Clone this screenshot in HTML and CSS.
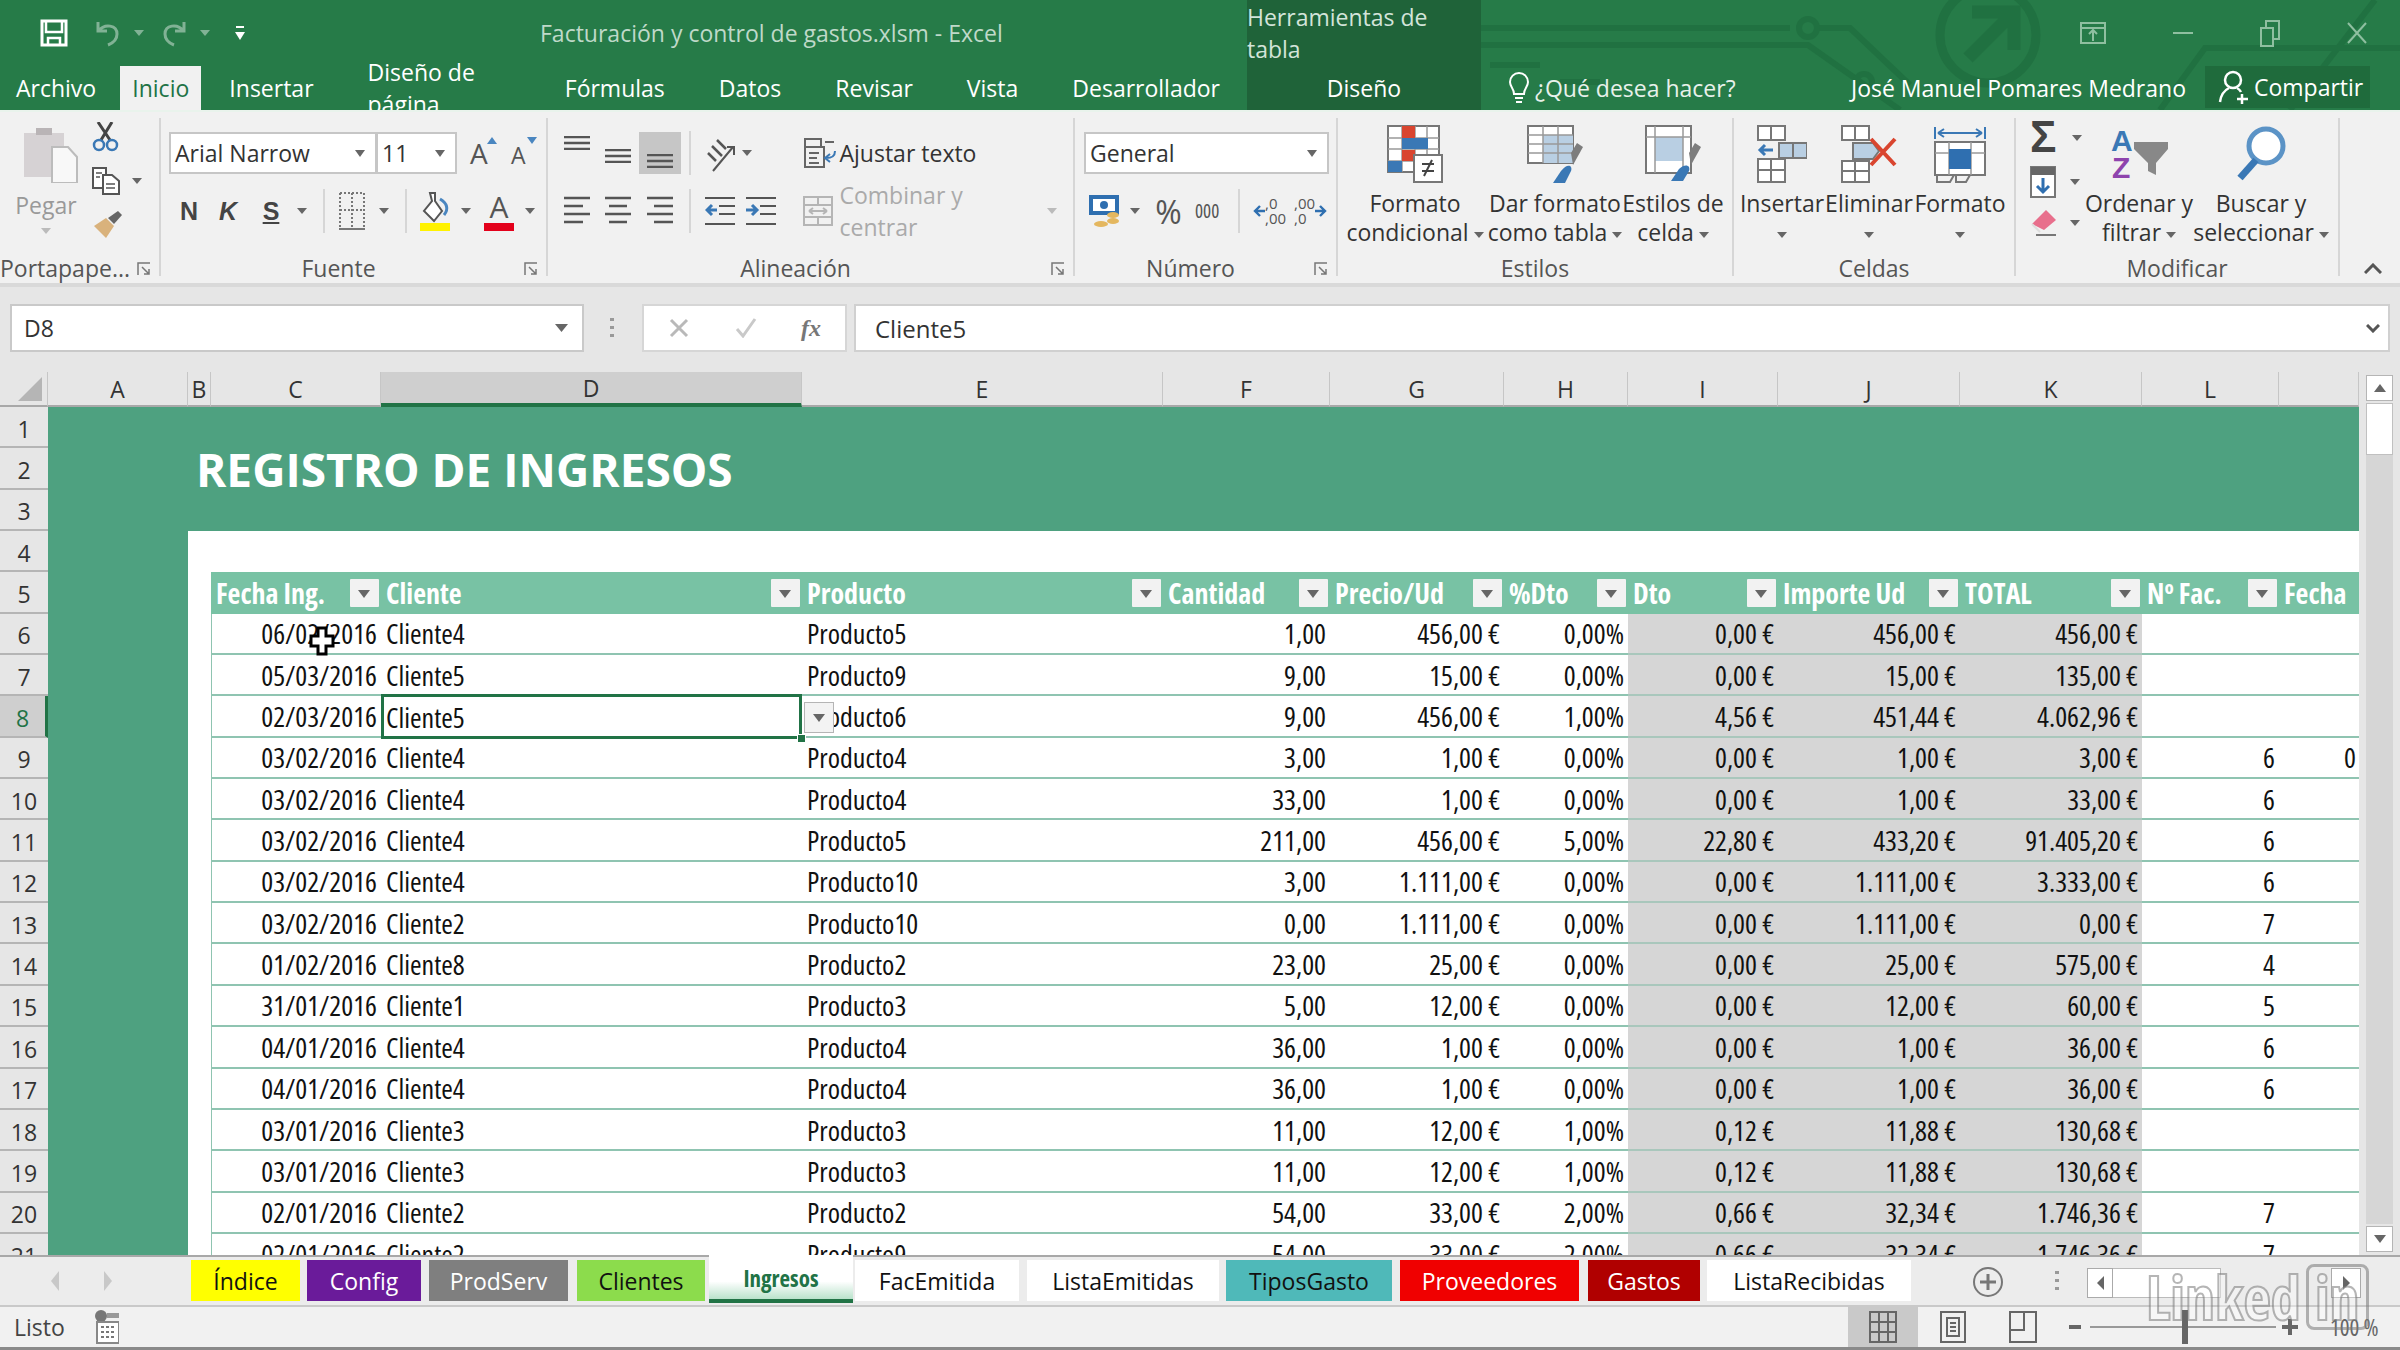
FILE: index.html
```html
<!DOCTYPE html>
<html lang="es">
<head>
<meta charset="utf-8">
<title>Facturación y control de gastos.xlsm - Excel</title>
<link rel="stylesheet" href="styles.css">
</head>
<body>
<div class="app">
  <header class="head">
    <svg class="circuit" width="2400" height="110" viewBox="0 0 2400 110" fill="none" stroke="#1f6e3f" stroke-width="6" opacity=".75">
      <path d="M1481 45H1808L1900 110"/><path d="M1481 28H1790M1815 28H1850L1910 85"/><circle cx="1808" cy="28" r="9"/>
      <circle cx="1988" cy="35" r="48" stroke-width="9"/><path d="M1972 12H2014V50M2012 14L1968 58" stroke-width="13"/>
      <path d="M2160 110L2205 48H2400M2290 110L2375 0"/><circle cx="1864" cy="82" r="8"/><path d="M1600 82H1560M1490 65H1540"/>
    </svg>
    <div class="qat">
      <svg class="ml40" width="28" height="28" viewBox="0 0 28 28" fill="none" stroke="#fff" stroke-width="3"><path d="M2 2H26V26H2Z"/><path d="M6 2V13H22V2M8 26V19H20V26" stroke-width="2.500"/></svg>
      <svg class="ml27 dim" width="26" height="28" viewBox="0 0 26 28" fill="none" stroke="#fff" stroke-width="3"><path d="M3 3V12H12M3 12C10 4 22 6 22 15C22 20 18 24 13 26"/></svg>
      <svg class="ml13 dim" width="10" height="6" viewBox="0 0 10 6" fill="#fff"><path d="M0 0H10L5 6Z"/></svg>
      <svg class="ml17 dim" width="26" height="28" viewBox="0 0 26 28" fill="none" stroke="#fff" stroke-width="3"><path d="M23 3V12H14M23 12C16 4 4 6 4 15C4 20 8 24 13 26"/></svg>
      <svg class="ml13 dim" width="10" height="6" viewBox="0 0 10 6" fill="#fff"><path d="M0 0H10L5 6Z"/></svg>
      <svg class="ml25" width="10" height="14" viewBox="0 0 10 14" fill="#fff"><path d="M1 0H9V2H1ZM0 6H10L5 14Z"/></svg>
      <span class="doc-title">Facturación y control de gastos.xlsm - Excel</span>
    </div>
    <div class="ctx ctx-title">Herramientas de tabla</div>
    <div class="winbtns">
      <svg width="26" height="22" viewBox="0 0 26 22" fill="none" stroke="#8fbfa0" stroke-width="2"><path d="M1 1H25V21H1ZM1 6H25M13 19V9M9 12L13 8L17 12"/></svg>
      <svg width="20" height="22" viewBox="0 0 20 22" stroke="#8fbfa0" stroke-width="2"><path d="M0 11H20"/></svg>
      <svg width="20" height="28" viewBox="0 0 20 28" fill="none" stroke="#8fbfa0" stroke-width="2"><path d="M1 9H13V27H1ZM6 9V2H19V20H13"/></svg>
      <svg width="20" height="22" viewBox="0 0 20 22" stroke="#8fbfa0" stroke-width="2"><path d="M1 1L19 21M19 1L1 21"/></svg>
    </div>
    <nav class="tabs">
      <span class="tab file">Archivo</span>
      <span class="tab active">Inicio</span>
      <span class="tab">Insertar</span>
      <span class="tab">Diseño de página</span>
      <span class="tab">Fórmulas</span>
      <span class="tab">Datos</span>
      <span class="tab">Revisar</span>
      <span class="tab">Vista</span>
      <span class="tab">Desarrollador</span>
    </nav>
    <div class="ctx ctx-tab">Diseño</div>
    <div class="tools">
      <svg class="ml26" width="24" height="32" viewBox="0 0 24 32" fill="none" stroke="#fff" stroke-width="2"><path d="M7 22C7 16 3 15 3 10A9 9 0 0 1 21 10C21 15 17 16 17 22ZM8 26H16M9 30H15"/></svg>
      <span class="ask">¿Qué desea hacer?</span>
      <span class="user">José Manuel Pomares Medrano</span>
      <span class="share">
        <svg width="32" height="34" viewBox="0 0 32 34" fill="none" stroke="#fff" stroke-width="2.500"><circle cx="15" cy="10" r="8"/><path d="M2 32C3 24 7 20 11 18M19 18C21 19 22 20 23 22M24 24V34M19 29H30"/></svg>
        Compartir
      </span>
    </div>
  </header>

  <section class="ribbon">
    <div class="group g-clip">
      <div class="body">
        <div class="paste">
          <svg class="paste-ic" width="54" height="58" viewBox="0 0 54 58"><path d="M0 8H40V52H0Z" fill="#d6d2d4"/><path d="M12 3H28V10H12Z" fill="#b9b4b6"/><path d="M28 22H44L53 32V58H28Z" fill="#f8f8f8" stroke="#bcbcbc" stroke-width="2"/></svg>
          <span class="lbl-grey">Pegar</span>
          <svg class="car-w" width="10" height="6" viewBox="0 0 10 6" fill="#bbb"><path d="M0 0H10L5 6Z"/></svg>
        </div>
        <div class="clip-tools">
          <svg width="28" height="30" viewBox="0 0 28 30" fill="none"><path d="M6 0L18 18M20 0L9 18" stroke="#444" stroke-width="3"/><circle cx="7" cy="23" r="5" stroke="#3a78b5" stroke-width="2.500"/><circle cx="20" cy="23" r="5" stroke="#3a78b5" stroke-width="2.500"/></svg>
          <span class="row-i">
            <svg width="28" height="28" viewBox="0 0 28 28" fill="#fff" stroke="#555" stroke-width="2"><path d="M1 1H14V21H1Z"/><path d="M11 8H20L27 14V27H11Z"/><path d="M4 6H10M4 10H8M14 17H23M14 21H23" stroke-width="1.500"/></svg>
            <svg class="ml12" width="10" height="6" viewBox="0 0 10 6" fill="#666"><path d="M0 0H10L5 6Z"/></svg>
          </span>
          <svg width="30" height="28" viewBox="0 0 30 28"><path d="M16 8L26 1L30 5L22 14Z" fill="#666"/><path d="M14 8L22 16L14 28L2 16Z" fill="#d9b27c"/></svg>
        </div>
      </div>
      <div class="label has-launcher">Portapape...</div>
      <svg class="launcher" width="14" height="14" viewBox="0 0 14 14" fill="none" stroke="#777" stroke-width="1.500"><path d="M1 13V1H13M5 5L12 12M12 7V12H7"/></svg>
    </div>

    <div class="group g-font">
      <div class="body rows">
        <div class="rb-row">
          <span class="combo c-font">Arial Narrow<i class="tri"></i></span>
          <span class="combo c-size">11<i class="tri"></i></span>
          <span class="grow ml13">A<svg class="sup" width="10" height="7" viewBox="0 0 10 7" fill="#4a86c0"><path d="M5 0L10 7H0Z"/></svg></span>
          <span class="shrink ml17">A<svg class="sup" width="10" height="7" viewBox="0 0 10 7" fill="#4a86c0"><path d="M0 0H10L5 7Z"/></svg></span>
        </div>
        <div class="rb-row">
          <b class="fmt ml10">N</b>
          <b class="fmt it ml19">K</b>
          <b class="fmt un ml23">S</b>
          <svg class="ml16" width="10" height="6" viewBox="0 0 10 6" fill="#666"><path d="M0 0H10L5 6Z"/></svg>
          <i class="sep ml16"></i>
          <svg class="ml14" width="26" height="38" viewBox="0 0 26 38" fill="none" stroke="#777" stroke-width="2"><path d="M1 1H25V35M1 1V35M13 1V35M1 18H25" stroke-dasharray="2 2"/><path d="M0 37H26"/></svg>
          <svg class="ml14" width="10" height="6" viewBox="0 0 10 6" fill="#666"><path d="M0 0H10L5 6Z"/></svg>
          <i class="sep ml16"></i>
          <svg class="ml13" width="30" height="40" viewBox="0 0 30 40"><path d="M10 2L15 2L15 10L22 20L14 30L4 20L12 10Z" fill="#fff" stroke="#555" stroke-width="2"/><path d="M20 8C27 12 29 18 24 24" fill="none" stroke="#4a86c0" stroke-width="3"/><path d="M0 32H30V40H0Z" fill="#fff200"/></svg>
          <svg class="ml11" width="10" height="6" viewBox="0 0 10 6" fill="#666"><path d="M0 0H10L5 6Z"/></svg>
          <span class="acolor ml13">A</span>
          <svg class="ml11" width="10" height="6" viewBox="0 0 10 6" fill="#666"><path d="M0 0H10L5 6Z"/></svg>
        </div>
      </div>
      <div class="label has-launcher">Fuente</div>
      <svg class="launcher" width="14" height="14" viewBox="0 0 14 14" fill="none" stroke="#777" stroke-width="1.500"><path d="M1 13V1H13M5 5L12 12M12 7V12H7"/></svg>
    </div>

    <div class="group g-align">
      <div class="body rows pad8">
        <div class="rb-row">
          <span class="al top"><svg width="28" height="14" viewBox="0 0 28 14" stroke="#555" stroke-width="2.400"><path d="M1 1H27M1 7H27M1 13H27"/></svg></span>
          <span class="al mid"><svg width="28" height="14" viewBox="0 0 28 14" stroke="#555" stroke-width="2.400"><path d="M1 1H27M1 7H27M1 13H27"/></svg></span>
          <span class="al bot on"><svg width="28" height="14" viewBox="0 0 28 14" stroke="#555" stroke-width="2.400"><path d="M1 1H27M1 7H27M1 13H27"/></svg></span>
          <i class="sep ml8"></i>
          <svg class="ml14" width="30" height="40" viewBox="0 0 30 40" fill="none" stroke="#555" stroke-width="2"><path d="M8 38L28 14M22 14H29V22"/><path d="M3 20L11 28M7 13L17 23M12 7L21 16" stroke-width="2.500"/></svg>
          <svg class="ml7" width="10" height="6" viewBox="0 0 10 6" fill="#666"><path d="M0 0H10L5 6Z"/></svg>
          <span class="wide-btn ml52">
            <svg width="32" height="30" viewBox="0 0 32 30" fill="none" stroke="#666" stroke-width="2"><path d="M1 1H17V9H1ZM1 9H20V29H1ZM5 15H15M5 20H13M5 25H15M21 4H30"/><path d="M31 13C31 19 27 20 22 20M26 16L21 20L26 24" stroke="#3a78b5"/></svg>
            <span class="wrap-t">Ajustar texto</span>
          </span>
        </div>
        <div class="rb-row">
          <span class="al"><svg width="28" height="30" viewBox="0 0 28 30" stroke="#555" stroke-width="2.400"><path d="M1 2H27M1 10H20M1 18H27M1 26H20"/></svg></span>
          <span class="al"><svg width="28" height="30" viewBox="0 0 28 30" stroke="#555" stroke-width="2.400"><path d="M1 2H27M5 10H23M1 18H27M5 26H23"/></svg></span>
          <span class="al"><svg width="28" height="30" viewBox="0 0 28 30" stroke="#555" stroke-width="2.400"><path d="M1 2H27M8 10H27M1 18H27M8 26H27"/></svg></span>
          <i class="sep ml8"></i>
          <svg class="ml14" width="30" height="30" viewBox="0 0 30 30" stroke="#555" stroke-width="2.200" fill="none"><path d="M0 2H30M14 10H30M14 18H30M0 28H30"/><path d="M12 14H2M7 9L2 14L7 19" stroke="#3a78b5" stroke-width="3"/></svg>
          <svg class="ml11" width="30" height="30" viewBox="0 0 30 30" stroke="#555" stroke-width="2.200" fill="none"><path d="M0 2H30M14 10H30M14 18H30M0 28H30"/><path d="M0 14H10M6 9L11 14L6 19" stroke="#3a78b5" stroke-width="3"/></svg>
          <span class="wide-btn ml27 off">
            <svg width="30" height="30" viewBox="0 0 30 30" fill="none" stroke="#b5b5b5" stroke-width="2"><path d="M1 1H29V29H1ZM1 9H29M1 21H29M15 1V9M15 21V29M6 15H24M6 15L10 12M6 15L10 18M24 15L20 12M24 15L20 18"/></svg>
            <span class="merge-t">Combinar y centrar</span>
            <svg width="10" height="6" viewBox="0 0 10 6" fill="#bbb"><path d="M0 0H10L5 6Z"/></svg>
          </span>
        </div>
      </div>
      <div class="label has-launcher">Alineación</div>
      <svg class="launcher" width="14" height="14" viewBox="0 0 14 14" fill="none" stroke="#777" stroke-width="1.500"><path d="M1 13V1H13M5 5L12 12M12 7V12H7"/></svg>
    </div>

    <div class="group g-num">
      <div class="body rows pad9">
        <div class="rb-row"><span class="combo c-num">General<i class="tri"></i></span></div>
        <div class="rb-row">
          <svg class="ml5" width="31" height="32" viewBox="0 0 31 32"><path d="M0 0H30V20H0Z" fill="#2f6fb0"/><path d="M4 4H26V16H4Z" fill="#fff"/><circle cx="15" cy="10" r="4" fill="#2f6fb0"/><ellipse cx="24" cy="20" rx="6" ry="3" fill="#e4b75f"/><ellipse cx="24" cy="26" rx="6" ry="3" fill="#e4b75f"/><ellipse cx="12" cy="29" rx="7" ry="3" fill="#e4b75f"/></svg>
          <svg class="ml10" width="10" height="6" viewBox="0 0 10 6" fill="#666"><path d="M0 0H10L5 6Z"/></svg>
          <span class="pct ml15">%</span>
          <span class="thou ml13">000</span>
          <i class="sep ml14"></i>
          <span class="dec ml13"><svg width="12" height="14" viewBox="0 0 12 14" fill="none" stroke="#2f6fb0" stroke-width="2.400"><path d="M12 7H2M7 2L2 7L7 12"/></svg><span class="dec-t">,0<br>,00</span></span>
          <span class="dec ml13"><span class="dec-t">,00<br>,0</span><svg width="12" height="14" viewBox="0 0 12 14" fill="none" stroke="#2f6fb0" stroke-width="2.400"><path d="M0 7H10M5 2L10 7L5 12"/></svg></span>
        </div>
      </div>
      <div class="label has-launcher">Número</div>
      <svg class="launcher" width="14" height="14" viewBox="0 0 14 14" fill="none" stroke="#777" stroke-width="1.500"><path d="M1 13V1H13M5 5L12 12M12 7V12H7"/></svg>
    </div>

    <div class="group g-styles">
      <div class="body pad2">
        <div class="big w150">
          <svg width="56" height="58" viewBox="0 0 56 58"><path d="M1 1H52V47H1Z" fill="#fff" stroke="#777" stroke-width="2"/><path d="M1 13H52M1 24H52M1 36H52M15 1V47M28 1V47M40 1V47" stroke="#999" stroke-width="1.500"/><path d="M15 1H28V13H15ZM15 25H28V36H15Z" fill="#d9452f"/><path d="M15 13H41V24H15ZM1 36H15V47H1Z" fill="#3a78b5"/><path d="M27 30H55V57H27Z" fill="#fff" stroke="#777" stroke-width="2"/><path d="M35 39H47M35 46H47M45 35L37 51" stroke="#444" stroke-width="2"/></svg>
          <span class="t">Formato<br>condicional<i class="tri-s"></i></span>
        </div>
        <div class="big w130">
          <svg width="56" height="58" viewBox="0 0 56 58"><path d="M1 1H46V38H1Z" fill="#fff" stroke="#777" stroke-width="2"/><path d="M16 10H46V38H16Z" fill="#b9cfe3"/><path d="M1 10H46M1 19H46M1 28H46M16 1V38M31 1V38" stroke="#999" stroke-width="1.500"/><path d="M44 28L50 18L56 22L46 40Z" fill="#7d7d7d"/><path d="M34 46C40 38 46 40 44 46L38 58H26Z" fill="#3a78b5"/></svg>
          <span class="t">Dar formato<br>como tabla<i class="tri-s"></i></span>
        </div>
        <div class="big w106">
          <svg width="56" height="58" viewBox="0 0 56 58"><path d="M1 1H46V48H1Z" fill="#fff" stroke="#777" stroke-width="2"/><path d="M10 12H38V36H10Z" fill="#b9cfe3"/><path d="M1 12H46M10 1V48M38 1V48" stroke="#999" stroke-width="1.500"/><path d="M44 28L50 18L56 22L46 40Z" fill="#7d7d7d"/><path d="M34 44C40 38 46 40 44 46L38 56H26Z" fill="#3a78b5"/></svg>
          <span class="t">Estilos de<br>celda<i class="tri-s"></i></span>
        </div>
      </div>
      <div class="label">Estilos</div>
    </div>

    <div class="group g-cells">
      <div class="body">
        <div class="big w96">
          <svg width="50" height="58" viewBox="0 0 50 58"><path d="M1 1H28V15H1ZM1 34H28V57H1ZM14 1V15M14 34V57M1 45H28" fill="#fff" stroke="#777" stroke-width="2"/><path d="M22 18H50V33H22ZM36 18V33" fill="#b9cfe3" stroke="#777" stroke-width="2"/><path d="M16 25H3M8 20L3 25L8 30" fill="none" stroke="#3a78b5" stroke-width="3"/></svg>
          <span class="t">Insertar<br><i class="tri-c"></i></span>
        </div>
        <div class="big w78">
          <svg width="56" height="58" viewBox="0 0 56 58"><path d="M1 1H28V15H1ZM1 36H28V57H1ZM14 1V15M14 36V57M1 46H28" fill="#fff" stroke="#777" stroke-width="2"/><path d="M12 18H32L38 26L32 34H12Z" fill="#b9cfe3" stroke="#777" stroke-width="2"/><path d="M30 14L54 40M54 14L30 40" stroke="#d9452f" stroke-width="4"/></svg>
          <span class="t">Eliminar<br><i class="tri-c"></i></span>
        </div>
        <div class="big w104">
          <svg width="52" height="58" viewBox="0 0 52 58"><path d="M1 2V14M51 2V14M4 8H48M4 8L10 4M4 8L10 12M48 8L42 4M48 8L42 12" fill="none" stroke="#3a78b5" stroke-width="2"/><path d="M1 17H51V50H1Z" fill="#fff" stroke="#777" stroke-width="2"/><path d="M1 28H51M15 17V50M37 17V50" stroke="#999" stroke-width="1.500"/><path d="M15 24H37V44H15Z" fill="#2f6fb0"/><path d="M3 50V57H16L20 50M22 50V57H32L36 50" fill="none" stroke="#777" stroke-width="2"/></svg>
          <span class="t">Formato<br><i class="tri-c"></i></span>
        </div>
      </div>
      <div class="label">Celdas</div>
    </div>

    <div class="group g-edit">
      <div class="body">
        <div class="edit-stack">
          <span class="row-i"><span class="sigma">Σ</span><svg class="ml12" width="10" height="6" viewBox="0 0 10 6" fill="#666"><path d="M0 0H10L5 6Z"/></svg></span>
          <span class="row-i"><svg width="26" height="32" viewBox="0 0 26 32"><path d="M1 1H25V31H1Z" fill="#fff" stroke="#777" stroke-width="2"/><path d="M1 1H25V9H1Z" fill="#666"/><path d="M13 12V26M7 20L13 26L19 20" fill="none" stroke="#2f6fb0" stroke-width="3"/></svg><svg class="ml14" width="10" height="6" viewBox="0 0 10 6" fill="#666"><path d="M0 0H10L5 6Z"/></svg></span>
          <span class="row-i"><svg width="26" height="26" viewBox="0 0 26 26"><path d="M16 0L26 10L14 20L2 14Z" fill="#e86f8c"/><path d="M2 14L10 22" stroke="#ddd" stroke-width="2"/><path d="M6 25H26" stroke="#777" stroke-width="2"/></svg><svg class="ml14" width="10" height="6" viewBox="0 0 10 6" fill="#666"><path d="M0 0H10L5 6Z"/></svg></span>
        </div>
        <div class="big w86">
          <svg width="58" height="54" viewBox="0 0 58 54"><text x="1" y="24" class="sort-a">A</text><text x="2" y="51" class="sort-z">Z</text><path d="M24 15H58V22L46 36V48L38 44V36L24 22Z" fill="#888"/></svg>
          <span class="t">Ordenar y<br>filtrar<i class="tri-s"></i></span>
        </div>
        <div class="big w154">
          <svg width="52" height="56" viewBox="0 0 52 56" fill="none"><circle cx="31" cy="20" r="17" fill="#fff" stroke="#5b93c6" stroke-width="5"/><path d="M21 34L5 52" stroke="#3a78b5" stroke-width="7"/></svg>
          <span class="t">Buscar y<br>seleccionar<i class="tri-s"></i></span>
        </div>
      </div>
      <div class="label">Modificar</div>
    </div>
    <svg class="collapse" width="18" height="11" viewBox="0 0 18 11" fill="none" stroke="#555" stroke-width="3"><path d="M1 10L9 2L17 10"/></svg>
  </section>

  <section class="fbar">
    <div class="namebox">D8<svg width="13" height="8" viewBox="0 0 13 8" fill="#666"><path d="M0 0H13L6.500 8Z"/></svg></div>
    <svg class="fdots" width="4" height="20" viewBox="0 0 4 20" fill="#999"><path d="M0 0H4V3H0ZM0 8H4V11H0ZM0 16H4V19H0Z"/></svg>
    <div class="fbtns">
      <svg width="20" height="20" viewBox="0 0 20 20" stroke="#b9b9b9" stroke-width="3"><path d="M2 2L18 18M18 2L2 18"/></svg>
      <svg width="22" height="20" viewBox="0 0 22 20" fill="none" stroke="#c9c9c9" stroke-width="3"><path d="M2 11L8 18L20 1"/></svg>
      <span class="fx">fx</span>
    </div>
    <div class="finput">Cliente5<svg width="14" height="9" viewBox="0 0 14 9" fill="none" stroke="#555" stroke-width="3"><path d="M1 1L7 7L13 1"/></svg></div>
  </section>

  <section class="sheet">
    <div class="grid">
      <div class="r colhead">
        <div class="corner"><svg width="24" height="24" viewBox="0 0 24 24" fill="#b5b5b5"><path d="M24 0V24H0Z"/></svg></div>
        <div>A</div><div>B</div><div>C</div><div class="csel">D</div><div>E</div><div>F</div><div>G</div><div>H</div><div>I</div><div>J</div><div>K</div><div>L</div><div></div>
      </div>
      <div class="rows-wrap">
        <div class="r"><div class="rh">1</div><div class="g span13"></div></div>
        <div class="r"><div class="rh">2</div><div class="g span13 title">REGISTRO DE INGRESOS</div></div>
        <div class="r"><div class="rh">3</div><div class="g span13"></div></div>
        <div class="r"><div class="rh">4</div><div class="g"></div><div class="w span12"></div></div>
        <div class="r thr"><div class="rh">5</div><div class="g"></div><div class="w"></div>
          <div class="th">Fecha Ing.<i class="fb"></i></div><div class="th">Cliente<i class="fb"></i></div><div class="th">Producto<i class="fb"></i></div><div class="th">Cantidad<i class="fb"></i></div><div class="th">Precio/Ud<i class="fb"></i></div><div class="th">%Dto<i class="fb"></i></div><div class="th">Dto<i class="fb"></i></div><div class="th">Importe Ud<i class="fb"></i></div><div class="th">TOTAL<i class="fb"></i></div><div class="th">Nº Fac.<i class="fb"></i></div><div class="th">Fecha</div>
        </div>
        <div class="r d"><div class="rh">6</div><div class="g"></div><div class="w"></div><div class="has-cursor">06/02/2016<svg class="cursor" width="26" height="30" viewBox="0 0 26 30"><path d="M9 2H17V10H24V20H17V28H9V20H2V10H9Z" fill="#fff" stroke="#000" stroke-width="3"/></svg></div><div>Cliente4</div><div>Producto5</div><div>1,00</div><div>456,00 €</div><div>0,00%</div><div>0,00 €</div><div>456,00 €</div><div>456,00 €</div><div></div><div></div></div>
        <div class="r d"><div class="rh">7</div><div class="g"></div><div class="w"></div><div>05/03/2016</div><div>Cliente5</div><div>Producto9</div><div>9,00</div><div>15,00 €</div><div>0,00%</div><div>0,00 €</div><div>15,00 €</div><div>135,00 €</div><div></div><div></div></div>
        <div class="r d"><div class="rh sel-h">8</div><div class="g"></div><div class="w"></div><div>02/03/2016</div><div class="sel">Cliente5<span class="handle"></span><span class="dd"><svg width="12" height="8" viewBox="0 0 12 8" fill="#666"><path d="M0 0H12L6 8Z"/></svg></span></div><div>Producto6</div><div>9,00</div><div>456,00 €</div><div>1,00%</div><div>4,56 €</div><div>451,44 €</div><div>4.062,96 €</div><div></div><div></div></div>
        <div class="r d"><div class="rh">9</div><div class="g"></div><div class="w"></div><div>03/02/2016</div><div>Cliente4</div><div>Producto4</div><div>3,00</div><div>1,00 €</div><div>0,00%</div><div>0,00 €</div><div>1,00 €</div><div>3,00 €</div><div>6</div><div>0</div></div>
        <div class="r d"><div class="rh">10</div><div class="g"></div><div class="w"></div><div>03/02/2016</div><div>Cliente4</div><div>Producto4</div><div>33,00</div><div>1,00 €</div><div>0,00%</div><div>0,00 €</div><div>1,00 €</div><div>33,00 €</div><div>6</div><div></div></div>
        <div class="r d"><div class="rh">11</div><div class="g"></div><div class="w"></div><div>03/02/2016</div><div>Cliente4</div><div>Producto5</div><div>211,00</div><div>456,00 €</div><div>5,00%</div><div>22,80 €</div><div>433,20 €</div><div>91.405,20 €</div><div>6</div><div></div></div>
        <div class="r d"><div class="rh">12</div><div class="g"></div><div class="w"></div><div>03/02/2016</div><div>Cliente4</div><div>Producto10</div><div>3,00</div><div>1.111,00 €</div><div>0,00%</div><div>0,00 €</div><div>1.111,00 €</div><div>3.333,00 €</div><div>6</div><div></div></div>
        <div class="r d"><div class="rh">13</div><div class="g"></div><div class="w"></div><div>03/02/2016</div><div>Cliente2</div><div>Producto10</div><div>0,00</div><div>1.111,00 €</div><div>0,00%</div><div>0,00 €</div><div>1.111,00 €</div><div>0,00 €</div><div>7</div><div></div></div>
        <div class="r d"><div class="rh">14</div><div class="g"></div><div class="w"></div><div>01/02/2016</div><div>Cliente8</div><div>Producto2</div><div>23,00</div><div>25,00 €</div><div>0,00%</div><div>0,00 €</div><div>25,00 €</div><div>575,00 €</div><div>4</div><div></div></div>
        <div class="r d"><div class="rh">15</div><div class="g"></div><div class="w"></div><div>31/01/2016</div><div>Cliente1</div><div>Producto3</div><div>5,00</div><div>12,00 €</div><div>0,00%</div><div>0,00 €</div><div>12,00 €</div><div>60,00 €</div><div>5</div><div></div></div>
        <div class="r d"><div class="rh">16</div><div class="g"></div><div class="w"></div><div>04/01/2016</div><div>Cliente4</div><div>Producto4</div><div>36,00</div><div>1,00 €</div><div>0,00%</div><div>0,00 €</div><div>1,00 €</div><div>36,00 €</div><div>6</div><div></div></div>
        <div class="r d"><div class="rh">17</div><div class="g"></div><div class="w"></div><div>04/01/2016</div><div>Cliente4</div><div>Producto4</div><div>36,00</div><div>1,00 €</div><div>0,00%</div><div>0,00 €</div><div>1,00 €</div><div>36,00 €</div><div>6</div><div></div></div>
        <div class="r d"><div class="rh">18</div><div class="g"></div><div class="w"></div><div>03/01/2016</div><div>Cliente3</div><div>Producto3</div><div>11,00</div><div>12,00 €</div><div>1,00%</div><div>0,12 €</div><div>11,88 €</div><div>130,68 €</div><div></div><div></div></div>
        <div class="r d"><div class="rh">19</div><div class="g"></div><div class="w"></div><div>03/01/2016</div><div>Cliente3</div><div>Producto3</div><div>11,00</div><div>12,00 €</div><div>1,00%</div><div>0,12 €</div><div>11,88 €</div><div>130,68 €</div><div></div><div></div></div>
        <div class="r d"><div class="rh">20</div><div class="g"></div><div class="w"></div><div>02/01/2016</div><div>Cliente2</div><div>Producto2</div><div>54,00</div><div>33,00 €</div><div>2,00%</div><div>0,66 €</div><div>32,34 €</div><div>1.746,36 €</div><div>7</div><div></div></div>
        <div class="r d"><div class="rh">21</div><div class="g"></div><div class="w"></div><div>02/01/2016</div><div>Cliente2</div><div>Producto9</div><div>54,00</div><div>33,00 €</div><div>2,00%</div><div>0,66 €</div><div>32,34 €</div><div>1.746,36 €</div><div>7</div><div></div></div>
      </div>
    </div>
    <div class="vscroll">
      <span class="vbtn"><svg width="12" height="8" viewBox="0 0 12 8" fill="#666"><path d="M6 0L12 8H0Z"/></svg></span>
      <span class="vtrack"><span class="vthumb"></span></span>
      <span class="vbtn"><svg width="12" height="8" viewBox="0 0 12 8" fill="#666"><path d="M0 0H12L6 8Z"/></svg></span>
    </div>
  </section>

  <section class="sheettabs">
    <div class="nav">
      <svg width="8" height="20" viewBox="0 0 8 20" fill="#c8c8c8"><path d="M8 0V20L0 10Z"/></svg>
      <svg width="8" height="20" viewBox="0 0 8 20" fill="#c8c8c8"><path d="M0 0V20L8 10Z"/></svg>
    </div>
    <span class="st s1">Índice</span>
    <span class="st s2">Config</span>
    <span class="st s3">ProdServ</span>
    <span class="st s4">Clientes</span>
    <span class="st s5">Ingresos</span>
    <span class="st s6">FacEmitida</span>
    <span class="st s7">ListaEmitidas</span>
    <span class="st s8">TiposGasto</span>
    <span class="st s9">Proveedores</span>
    <span class="st s10">Gastos</span>
    <span class="st s11">ListaRecibidas</span>
    <svg class="addsheet" width="30" height="30" viewBox="0 0 30 30" fill="none" stroke="#777" stroke-width="2"><circle cx="15" cy="15" r="14"/><path d="M15 7V23M7 15H23" stroke-width="3"/></svg>
    <svg class="tdots" width="4" height="20" viewBox="0 0 4 20" fill="#999"><path d="M0 0H4V3H0ZM0 8H4V11H0ZM0 16H4V19H0Z"/></svg>
    <div class="hscroll">
      <span class="hbtn"><svg width="7" height="14" viewBox="0 0 7 14" fill="#666"><path d="M7 0V14L0 7Z"/></svg></span>
      <span class="hthumb"></span>
      <span class="hbtn hright"><svg width="7" height="14" viewBox="0 0 7 14" fill="#666"><path d="M0 0V14L7 7Z"/></svg></span>
    </div>
  </section>

  <footer class="status">
    <span class="ready">Listo</span>
    <svg class="macro" width="24" height="34" viewBox="0 0 24 34"><circle cx="6" cy="6" r="6" fill="#777"/><path d="M12 3H24V8H12Z" fill="#999"/><path d="M2 12H24V33H2Z" fill="#fff" stroke="#888" stroke-width="2"/><path d="M6 17H20M6 22H20M6 27H20" stroke="#777" stroke-width="2" stroke-dasharray="3 2"/></svg>
    <div class="views">
      <span class="vw on"><svg width="28" height="32" viewBox="0 0 28 32" fill="none" stroke="#666" stroke-width="2"><path d="M1 1H27V31H1ZM1 11H27M1 21H27M10 1V31M19 1V31"/></svg></span>
      <span class="vw"><svg width="26" height="32" viewBox="0 0 26 32" fill="none" stroke="#666" stroke-width="2"><path d="M1 1H25V31H1ZM7 7H19V25H7ZM10 12H16M10 16H16M10 20H16"/></svg></span>
      <span class="vw"><svg width="28" height="32" viewBox="0 0 28 32" fill="none" stroke="#666" stroke-width="2"><path d="M1 1H27V31H1ZM15 1V19H1"/></svg></span>
    </div>
    <div class="zoom">
      <i class="zm"></i>
      <span class="slider"><i class="knob"></i></span>
      <i class="zp"></i>
      <span class="pctz">100 %</span>
    </div>
  </footer>
  <div class="watermark">Linked<span>in</span></div>
</div>
</body>
</html>
```
FILE: styles.css
```css
* { box-sizing: border-box; }
html, body { margin: 0; padding: 0; }
body { font-family: "Open Sans", Roboto, sans-serif; font-stretch: 92%; font-size: 23px; color: #444; }
i { font-style: normal; display: block; flex: none; }
svg { display: block; flex: none; }

.app { position: relative; width: 2400px; height: 1350px; overflow: hidden; display: flex; flex-direction: column; background: #f1f1f1; }

.ml5 { margin-left: 5px; } .ml7 { margin-left: 7px; } .ml8 { margin-left: 8px; } .ml9 { margin-left: 9px; }
.ml10 { margin-left: 10px; } .ml11 { margin-left: 11px; } .ml12 { margin-left: 12px; } .ml13 { margin-left: 13px; }
.ml14 { margin-left: 14px; } .ml15 { margin-left: 15px; } .ml16 { margin-left: 16px; } .ml17 { margin-left: 17px; }
.ml19 { margin-left: 19px; } .ml23 { margin-left: 23px; } .ml25 { margin-left: 25px; } .ml26 { margin-left: 26px; }
.ml27 { margin-left: 27px; } .ml40 { margin-left: 40px; } .ml52 { margin-left: 52px; }

/* header */
.head { position: relative; flex: none; height: 110px; background: #267b48; display: grid; grid-template-columns: 1247px 234px 1fr; grid-template-rows: 66px 44px; color: #fff; }
.circuit { position: absolute; left: 0; top: 0; }
.head > :not(.circuit) { position: relative; }
.qat { display: flex; align-items: center; }
.dim { opacity: .42; }
.doc-title { margin-left: 295px; color: #bfd9c9; }
.ctx { background: #1f6339; display: flex; align-items: center; justify-content: center; color: #d3e4d9; }
.ctx-tab { color: #fff; }
.winbtns { display: flex; align-items: center; justify-content: flex-end; gap: 67px; padding-right: 33px; }
.tabs { display: flex; align-items: stretch; }
.tab { display: flex; align-items: center; padding: 0 27px; }
.file { padding: 0 24px 0 16px; }
.active { background: #f1f1f1; color: #217346; width: 105px; justify-content: center; padding: 0; margin-right: 1px; }
.tools { display: flex; align-items: center; }
.ask { margin-left: 4px; color: #e8f1eb; flex: 1; }
.user { margin-right: 19px; color: #fff; }
.share { margin-right: 30px; width: 165px; height: 42px; margin-bottom: 2px; background: #1f6b3c; display: flex; align-items: center; gap: 4px; padding-left: 13px; }

/* ribbon */
.ribbon { position: relative; flex: none; height: 173px; padding-top: 8px; display: flex; align-items: flex-start; background: #f1f1f1; box-shadow: inset 0 2px 0 #e9f3ec; }
.group { position: relative; height: 158px; border-right: 2px solid #d6d6d6; display: flex; flex-direction: column; flex: none; }
.g-clip { width: 161px; } .g-font { width: 387px; } .g-align { width: 527px; } .g-num { width: 263px; }
.g-styles { width: 396px; } .g-cells { width: 282px; } .g-edit { width: 324px; }
.body { height: 128px; flex: none; display: flex; }
.rows { flex-direction: column; padding: 14px 0 0 8px; gap: 16px; }
.pad8 { padding-left: 8px; } .pad9 { padding-left: 9px; } .pad2 { padding-left: 2px; }
.rb-row { display: flex; align-items: center; height: 42px; }
.label { flex: none; height: 28px; line-height: 28px; margin-top: 8px; text-align: center; color: #555; white-space: nowrap; }
.has-launcher { padding-right: 30px; }
.launcher { position: absolute; right: 8px; bottom: 0; }
.paste { width: 92px; padding-top: 7px; display: flex; flex-direction: column; align-items: center; }
.paste-ic { margin-left: 10px; }
.lbl-grey { color: #999; margin-top: 8px; line-height: 28px; }
.car-w { margin-top: 9px; }
.clip-tools { padding-top: 4px; display: flex; flex-direction: column; gap: 15px; }
.row-i { display: flex; align-items: center; }
.combo { position: relative; height: 42px; background: #fff; border: 2px solid #c6c6c6; display: flex; align-items: center; justify-content: space-between; padding: 0 10px 0 4px; color: #333; }
.c-font { width: 208px; } .c-size { width: 81px; margin-left: -1px; } .c-num { width: 245px; }
.tri { width: 0; height: 0; border-left: 5px solid transparent; border-right: 5px solid transparent; border-top: 7px solid #666; }
.tri-s { display: inline-block; margin: 0 0 3px 5px; width: 0; height: 0; border-left: 5px solid transparent; border-right: 5px solid transparent; border-top: 6px solid #666; }
.tri-c { display: inline-block; width: 0; height: 0; margin-bottom: 3px; border-left: 5px solid transparent; border-right: 5px solid transparent; border-top: 6px solid #666; }
.grow, .shrink { position: relative; color: #555; line-height: 1; display: block; }
.grow { font-size: 28px; width: 24px; } .shrink { font-size: 23px; width: 20px; margin-top: 5px; }
.sup { position: absolute; right: -3px; top: -2px; }
.shrink .sup { top: -7px; right: -6px; }
.fmt { width: 20px; text-align: center; font-size: 25px; color: #444; font-family: "Liberation Sans", sans-serif; }
.it { font-style: italic; }
.un { text-decoration: underline; }
.sep { width: 2px; height: 44px; background: #d6d6d6; }
.acolor { width: 30px; height: 40px; font-size: 30px; line-height: 32px; text-align: center; color: #555; border-bottom: 8px solid #e3001b; }
.al { width: 41.5px; height: 42px; display: flex; align-items: center; justify-content: center; }
.al.top { align-items: flex-start; padding-top: 4px; }
.al.mid { align-items: center; padding-top: 6px; }
.al.bot { align-items: flex-end; padding-bottom: 6px; }
.al.on { background: #c6c6c6; }
.wide-btn { display: flex; align-items: center; gap: 4px; color: #333; }
.off { color: #aaa; }
.merge-t { width: 203px; margin-left: 3px; }
.pct { width: 27px; font-size: 32px; text-align: center; color: #555; }
.thou { width: 29px; font-size: 19px; color: #555; font-stretch: 80%; }
.dec { display: flex; align-items: center; width: 28px; font-size: 15px; line-height: 15px; color: #555; }
.big { display: flex; flex-direction: column; align-items: center; padding-top: 6px; flex: none; }
.big > svg { height: 60px; }
.big .t { margin-top: 5px; line-height: 29px; text-align: center; color: #333; white-space: nowrap; }
.w150 { width: 150px; } .w130 { width: 130px; } .w106 { width: 106px; } .w96 { width: 96px; } .w78 { width: 78px; } .w104 { width: 104px; } .w86 { width: 86px; } .w154 { width: 154px; margin-left: 2px; }
.edit-stack { width: 84px; padding: 4px 0 0 14px; display: flex; flex-direction: column; gap: 12px; }
.sigma { font-size: 44px; font-weight: 700; line-height: 30px; height: 32px; width: 30px; color: #444; font-family: "Liberation Sans", sans-serif; }
.sort-a { font: bold 30px "Liberation Sans", sans-serif; fill: #3a78b5; }
.sort-z { font: bold 30px "Liberation Sans", sans-serif; fill: #8e44ad; }
.collapse { position: absolute; left: 2364px; top: 153px; }

/* formula bar */
.fbar { flex: none; height: 89px; background: #e6e6e6; border-top: 4px solid #d9d9d9; padding: 17px 10px 0 10px; display: flex; align-items: flex-start; }
.namebox { width: 574px; height: 48px; background: #fff; border: 2px solid #c9c9c9; display: flex; align-items: center; justify-content: space-between; padding: 0 14px 0 12px; color: #333; }
.fdots { margin: 14px 0 0 26px; }
.fbtns { margin-left: 28px; width: 205px; height: 48px; background: #fff; border: 2px solid #d6d6d6; display: flex; align-items: center; padding-left: 25px; gap: 46px; }
.fx { font: italic bold 24px "Liberation Serif", serif; color: #777; margin-left: -2px; }
.finput { margin-left: 7px; width: 1536px; height: 48px; background: #fff; border: 2px solid #d0d0d0; display: flex; align-items: center; justify-content: space-between; padding: 0 8px 0 19px; font-size: 24px; color: #333; }

/* sheet */
.sheet { flex: 1; min-height: 0; display: flex; }
.grid { width: 2359px; display: flex; flex-direction: column; overflow: hidden; }
.r { display: grid; grid-template-columns: 48px 140px 23px 170px 421px 361px 167px 174px 124px 150px 182px 182px 137px 80px; grid-template-rows: 41.35px; height: 41.35px; flex: none; }
.rows-wrap { flex: 1; min-height: 0; overflow: hidden; }
.colhead { grid-template-rows: 35px; height: 35px; background: #e6e6e6; }
.colhead > div { display: flex; align-items: center; justify-content: center; color: #333; border-right: 1px solid #c6c6c6; border-bottom: 2px solid #a8a8a8; }
.corner { justify-content: flex-end !important; align-items: flex-end !important; padding: 0 5px 4px 0; border-right: 1px solid #bbb; }
.colhead .csel { background: #cfcfcf; color: #333; border-bottom: 4px solid #217346; }
.rh { background: #e6e6e6; border-bottom: 2px solid #b5b5b5; display: flex; align-items: center; justify-content: center; color: #333; padding-top: 4px; }
.sel-h { background: #cfcfcf; border-right: 3px solid #217346; color: #217346; }
.g { background: #4ea180; }
.w { background: #fff; }
.span13 { grid-column: span 13; }
.span12 { grid-column: span 12; }
.title { display: flex; align-items: center; padding-left: 148px; color: #fff; font: bold 46px/1 "Open Sans", sans-serif; font-stretch: 88%; }
.thr .th { background: #78c2a4; color: #fff; font: bold 28px/1 "Open Sans", sans-serif; font-stretch: 79%; display: flex; align-items: center; justify-content: space-between; padding: 0 2px 0 5px; white-space: nowrap; overflow: hidden; }
.fb { position: relative; width: 29px; height: 28px; background: #f2f2f2; border-radius: 1px; }
.fb::after { content: ""; position: absolute; left: 8px; top: 11px; border-left: 6px solid transparent; border-right: 6px solid transparent; border-top: 8px solid #666; }
.d > div:nth-child(n+4) { display: flex; align-items: center; background: #fff; border-bottom: 2px solid #8fc4b1; font: 28px/1 "Open Sans", sans-serif; font-stretch: 75%; color: #111; white-space: nowrap; overflow: hidden; justify-content: flex-end; padding-right: 4px; }
.d > div:nth-child(4) { border-left: 1px solid #8fc4b1; }
.d > div:nth-child(5), .d > div:nth-child(6) { justify-content: flex-start; padding: 0 0 0 5px; }
.d > div:nth-child(14) { justify-content: flex-start; padding: 0 0 0 65px; }
.d > div:nth-child(10), .d > div:nth-child(11), .d > div:nth-child(12) { background: #d6d6d6; border-bottom-color: #a9c7bc; }
.d > div.has-cursor { position: relative; overflow: visible; }
.cursor { position: absolute; left: 97px; top: 12px; }
.d > div.sel { position: relative; overflow: visible; box-shadow: inset 0 0 0 3px #217346; height: 45px; margin-top: -2px; z-index: 2; background: #fff; border-bottom: 0; }
.handle { position: absolute; right: -4px; bottom: -4px; width: 9px; height: 9px; background: #217346; border: 1px solid #fff; }
.dd { position: absolute; left: 423px; top: 8px; width: 30px; height: 31px; background: #f3f3f3; border: 1px solid #b5b5b5; display: flex; align-items: center; justify-content: center; }

.vscroll { flex: none; width: 41px; background: #e6e6e6; padding: 3px 7px 3px 7px; display: flex; flex-direction: column; gap: 2px; }
.vbtn { flex: none; height: 26px; background: #fff; border: 1px solid #b5b5b5; display: flex; align-items: center; justify-content: center; }
.vtrack { flex: 1; background: #d6d6d6; }
.vthumb { display: block; height: 52px; background: #fff; border: 1px solid #c0c0c0; }

/* sheet tabs */
.sheettabs { flex: none; height: 52px; background: #ececec; border-top: 2px solid #a8a8a8; border-bottom: 2px solid #c9c9c9; display: flex; align-items: flex-start; }
.nav { width: 191px; padding: 14px 0 0 51px; display: flex; gap: 45px; }
.st { height: 41px; margin-top: 3px; margin-right: 7px; display: flex; align-items: center; justify-content: center; flex: none; background: #fff; color: #111; }
.s1 { width: 109px; background: #ffff00; margin-right: 7px; }
.s2 { width: 114px; background: #6a1b9a; color: #fff; margin-right: 8px; }
.s3 { width: 139px; background: #7f7f7f; color: #fff; margin-right: 9px; }
.s4 { width: 128px; background: #8cdc4c; margin-right: 4px; }
.s5 { width: 144px; height: 48px; margin-top: -2px; margin-right: 2px; padding-top: 2px; color: #217346; font-weight: 700; font-stretch: 85%; background: linear-gradient(#fff 60%, #b9e2cb); border-bottom: 4px solid #217346; }
.s6 { width: 164px; margin-right: 8px; }
.s7 { width: 192px; }
.s8 { width: 166px; background: #4fb9b9; margin-right: 8px; }
.s9 { width: 179px; background: #f00000; color: #fff; margin-right: 9px; }
.s10 { width: 112px; background: #b00000; color: #fff; }
.s11 { width: 204px; margin-right: 0; }
.addsheet { margin: 10px 0 0 62px; }
.tdots { margin: 14px 0 0 52px; }
.hscroll { margin: 11px 0 0 28px; width: 278px; height: 30px; display: flex; }
.hbtn { width: 26px; height: 30px; background: #fff; border: 1px solid #aaa; display: flex; align-items: center; justify-content: center; flex: none; }
.hthumb { width: 108px; height: 30px; background: #fff; border: 1px solid #bbb; border-left: 0; }
.hright { margin-left: 110px; width: 30px; }

/* status */
.status { flex: none; height: 43px; background: #f1f1f1; border-bottom: 3px solid #8a8a8a; display: flex; align-items: center; color: #444; }
.ready { margin-left: 14px; width: 44px; }
.macro { margin-left: 37px; }
.views { margin-left: 1729px; display: flex; align-self: stretch; }
.vw { width: 70px; display: flex; align-items: center; justify-content: center; }
.vw.on { background: #c9c9c9; }
.zoom { position: relative; margin-left: 11px; display: flex; align-items: center; }
.zm { width: 12px; height: 4px; background: #666; }
.slider { position: relative; width: 186px; height: 2px; background: #999; margin-left: 9px; }
.knob { position: absolute; left: 92px; top: -16px; width: 6px; height: 34px; background: #666; }
.zp { position: relative; width: 16px; height: 4px; background: #666; margin-left: 6px; }
.zp::after { content: ""; position: absolute; left: 6px; top: -6px; width: 4px; height: 16px; background: #666; }
.pctz { margin-left: 32px; white-space: nowrap; color: #666; font-stretch: 80%; }

.watermark { position: absolute; left: 2146px; top: 1264px; font: bold 60px/1 "Open Sans", sans-serif; font-stretch: 75%; color: rgba(255,255,255,.35); -webkit-text-stroke: 2px rgba(120,120,120,.55); display: flex; align-items: center; }
.watermark span { margin-left: 5px; padding: 0 6px; border: 3px solid rgba(120,120,120,.55); border-radius: 8px; }
```
